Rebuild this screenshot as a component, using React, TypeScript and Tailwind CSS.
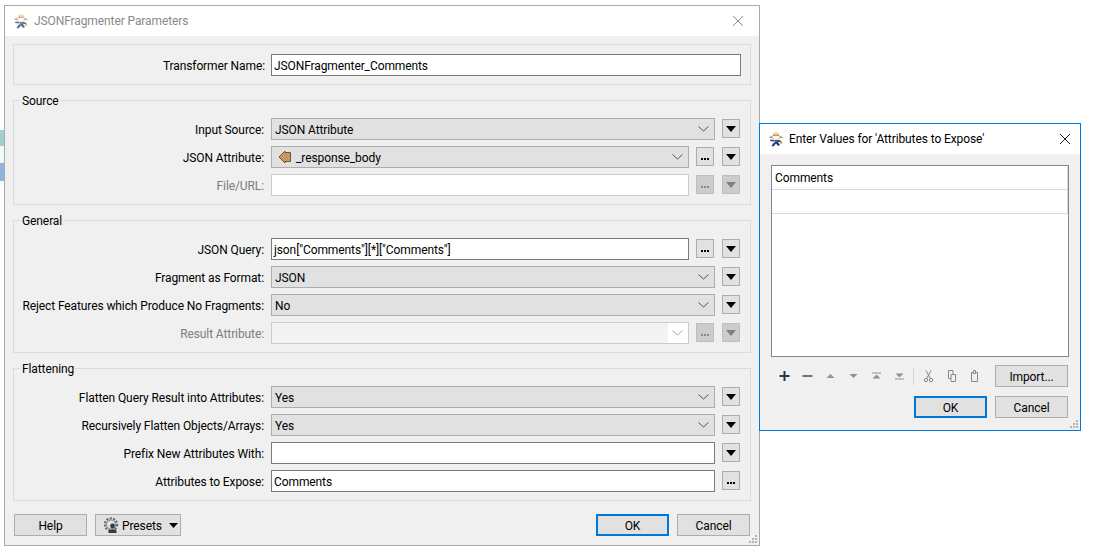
import type { ReactNode } from "react";

const FmeIcon = ({ dim = false }: { dim?: boolean }) => (
  <svg width="16" height="16" viewBox="0 0 16 16" className={dim ? "opacity-75" : ""}>
    <path d="M0.5 6.5 L5 4.5 H11 L15.5 6.5 L11 7.5 H5 Z" fill="#8f9499" />
    <path d="M5 2.5 Q8 -0.5 11 2.5 V4 H5 Z" fill="#f3d98a" />
    <path d="M4.5 4 H11.5 V6.5 L9.5 9 H6.5 L4.5 6.5 Z" fill="#fbf7ef" stroke="#c9c4ba" strokeWidth="0.4" />
    <path d="M5.5 3.8 H7.5 V5 H5.5 Z M8.5 3.8 H10.5 V5 H8.5 Z" fill="#e2502f" />
    <path d="M6.5 9 H9.5 L10.5 11 L7 11.5 Z" fill="#2a5db0" />
    <path d="M7 11 L5 12.5 L3.5 15 L5.5 15.5 L8 12.5 L10 15 L12 14 L10 11 Z" fill="#1f3f7a" />
    <path d="M2.5 8.5 L6.5 9 L6 10.5 L2 10 Z" fill="#3b4148" />
    <path d="M9.5 8.5 L13.5 10 L13 11.5 L9.5 10.5 Z" fill="#3b4148" />
    <path d="M12 11 L14 10.5 L14.5 12.5 L12.5 13 Z" fill="#e8a23a" />
  </svg>
);

const CloseIcon = ({ color }: { color: string }) => (
  <svg width="12" height="12" viewBox="0 0 12 12" fill="none" stroke={color} strokeWidth="1">
    <path d="M1 1 L11 11 M11 1 L1 11" />
  </svg>
);

const Chevron = ({ dim = false }: { dim?: boolean }) => (
  <svg width="11" height="6" viewBox="0 0 11 6" fill="none" stroke={dim ? "#a8a8a8" : "#555"} strokeWidth="1">
    <path d="M0.5 0.5 L5.5 5 L10.5 0.5" />
  </svg>
);

const MenuBtn = ({ disabled = false }: { disabled?: boolean }) => (
  <div
    className={`flex h-[19px] w-[18px] shrink-0 items-center justify-center border ${
      disabled ? "border-[#bfbfbf] bg-[#cccccc]" : "border-[#adadad] bg-[#e1e1e1]"
    }`}
  >
    <svg width="10" height="6" viewBox="0 0 10 6">
      <path d="M0 0 H10 L5 6 Z" fill={disabled ? "#7f7f7f" : "#000"} />
    </svg>
  </div>
);

const DotsBtn = ({ disabled = false }: { disabled?: boolean }) => (
  <div
    className={`flex h-[19px] w-[18px] shrink-0 items-end justify-center gap-px pb-[5px] border ${
      disabled ? "border-[#bfbfbf] bg-[#cccccc]" : "border-[#adadad] bg-[#e1e1e1]"
    }`}
  >
    <span className={`h-0.5 w-0.5 ${disabled ? "bg-[#8a8a8a]" : "bg-black"}`} />
    <span className={`h-0.5 w-0.5 ${disabled ? "bg-[#8a8a8a]" : "bg-black"}`} />
    <span className={`h-0.5 w-0.5 ${disabled ? "bg-[#8a8a8a]" : "bg-black"}`} />
  </div>
);

const Combo = ({ children }: { children: ReactNode }) => (
  <div className="flex h-[22px] min-w-0 flex-1 items-center border border-[#adadad] bg-[#e1e1e1] pl-[3px] pr-[5px] text-black">
    <div className="flex flex-1 items-center pt-[2px]">{children}</div>
    <Chevron />
  </div>
);

const TextBox = ({ value = "", disabled = false }: { value?: string; disabled?: boolean }) => (
  <div
    className={`flex h-[22px] min-w-0 flex-1 items-center border pl-[2px] pt-[2px] ${
      disabled ? "border-[#cccccc] bg-white" : "border-[#7a7a7a] bg-white"
    }`}
  >
    {value}
  </div>
);

const Row = ({ label, dim = false, children }: { label: string; dim?: boolean; children: ReactNode }) => (
  <div className="flex items-start gap-[7px] pr-[10px]">
    <div className={`h-[22px] w-[250px] shrink-0 text-right leading-[24px] whitespace-nowrap ${dim ? "text-[#7d7d7d]" : "text-black"}`}>
      {label}:
    </div>
    {children}
  </div>
);

const Side = ({ children }: { children: ReactNode }) => (
  <div className="flex shrink-0 items-start gap-[8px] pt-px">{children}</div>
);

const Group = ({ title, className = "", children }: { title: string; className?: string; children: ReactNode }) => (
  <div className={`relative flex flex-col gap-[6px] border border-[#dcdcdc] pb-[8px] pt-[17px] ${className}`}>
    <span className="absolute left-[6px] top-[-8px] bg-[#f0f0f0] pl-[2px] pr-px leading-[16px] text-black">{title}</span>
    {children}
  </div>
);

const Btn = ({ children, primary = false, className = "" }: { children: ReactNode; primary?: boolean; className?: string }) => (
  <div
    className={`flex h-[22px] w-[73px] items-center justify-center bg-[#e1e1e1] pt-[2px] text-black ${
      primary ? "border-2 border-[#0078d7]" : "border border-[#adadad]"
    } ${className}`}
  >
    {children}
  </div>
);

const PresetsIcon = () => (
  <svg width="17" height="17" viewBox="0 0 17 17" fill="none">
    <circle cx="8" cy="7.5" r="6.2" stroke="#5f6468" strokeWidth="2" strokeDasharray="2 1.4" />
    <circle cx="8" cy="7.5" r="4.6" stroke="#5f6468" strokeWidth="0.8" />
    <circle cx="9.5" cy="9" r="2.4" fill="#2a3f4f" />
    <path d="M5.5 16 V14.6 Q5.5 12.5 7.5 12.5 H11.5 Q13.5 12.5 13.5 14.6 V16 Z" fill="#2a3f4f" />
  </svg>
);

const ToolIcon = ({ children }: { children: ReactNode }) => (
  <svg width="23" height="16" viewBox="0 0 23 16" className="shrink-0">
    {children}
  </svg>
);

const Toolbar = () => (
  <div className="ml-[2px] flex items-center">
    <ToolIcon>
      <path d="M11.5 3 V13 M6.5 8 H16.5" stroke="#24384a" strokeWidth="2" />
    </ToolIcon>
    <ToolIcon>
      <path d="M6.5 8 H16.5" stroke="#6d747a" strokeWidth="2" />
    </ToolIcon>
    <ToolIcon>
      <path d="M7.5 10 L11.5 6 L15.5 10 Z" fill="#8d9296" />
    </ToolIcon>
    <ToolIcon>
      <path d="M7.5 6 L11.5 10 L15.5 6 Z" fill="#8d9296" />
    </ToolIcon>
    <ToolIcon>
      <path d="M7 4.5 H16 V5.5 H7 Z M7.5 10.5 L11.5 6.5 L15.5 10.5 Z" fill="#8d9296" />
    </ToolIcon>
    <ToolIcon>
      <path d="M7.5 5.5 L11.5 9.5 L15.5 5.5 Z M7 10.5 H16 V11.5 H7 Z" fill="#8d9296" />
    </ToolIcon>
    <div className="ml-[2px] mr-[3px] h-[17px] w-px bg-[#d5d5d5]" />
    <ToolIcon>
      <path d="M9 2.5 L13 10 M14 2.5 L10 10" stroke="#85898c" strokeWidth="1" fill="none" />
      <circle cx="9" cy="12" r="1.7" stroke="#85898c" fill="none" />
      <circle cx="14" cy="12" r="1.7" stroke="#85898c" fill="none" />
    </ToolIcon>
    <ToolIcon>
      <path d="M8.5 2.5 H13 V10.5 H8.5 Z" stroke="#85898c" fill="#f0f0f0" />
      <path d="M11 6.5 H15.5 V13.5 H11 Z" stroke="#85898c" fill="#f0f0f0" />
    </ToolIcon>
    <ToolIcon>
      <path d="M8.5 4.5 H14.5 V13.5 H8.5 Z" stroke="#85898c" fill="#f0f0f0" />
      <path d="M10.5 2.5 H12.5 V5.5 H10.5 Z" stroke="#85898c" fill="#f0f0f0" />
    </ToolIcon>
  </div>
);

const Grip = () => (
  <svg width="10" height="10" viewBox="0 0 10 10" className="absolute bottom-px right-px">
    <path d="M7 1 h2 v2 h-2 Z M4 4 h2 v2 h-2 Z M7 4 h2 v2 h-2 Z M1 7 h2 v2 h-2 Z M4 7 h2 v2 h-2 Z M7 7 h2 v2 h-2 Z" fill="#b5b5b5" />
  </svg>
);

const ParametersWindow = () => (
  <div className="absolute left-[4px] top-[5px] flex h-[541px] w-[756px] flex-col border border-[#a9a9a9] bg-[#f0f0f0]">
    <div className="flex h-[30px] shrink-0 items-center bg-white pl-[8px] pr-[15px] text-[#8a8a8a]">
      <FmeIcon dim />
      <span className="ml-[5px] flex-1">JSONFragmenter Parameters</span>
      <CloseIcon color="#8a8a8a" />
    </div>
    <div className="flex flex-1 flex-col px-[8px] pt-[8px]">
      <div className="flex items-center gap-[6px] border border-[#dcdcdc] pb-[8px] pl-[0px] pr-[9px] pt-[9px]">
        <div className="h-[22px] w-[251px] shrink-0 text-right leading-[24px] text-black">Transformer Name:</div>
        <TextBox value="JSONFragmenter_Comments" />
      </div>

      <Group title="Source" className="mt-[15px]">
        <Row label="Input Source">
          <Combo>JSON Attribute</Combo>
          <Side>
            <MenuBtn />
          </Side>
        </Row>
        <Row label="JSON Attribute">
          <Combo>
            <svg width="14" height="14" viewBox="0 0 14 14" className="ml-[3px] mr-[4px] -translate-y-px">
              <path d="M1 7 L7 1 V2.5 H12.5 V11.5 H7 V13 Z" fill="#c49a62" stroke="#6f5530" strokeWidth="1" />
            </svg>
            _response_body
          </Combo>
          <Side>
            <DotsBtn />
            <MenuBtn />
          </Side>
        </Row>
        <Row label="File/URL" dim>
          <TextBox disabled />
          <Side>
            <DotsBtn disabled />
            <MenuBtn disabled />
          </Side>
        </Row>
      </Group>

      <Group title="General" className="mt-[15px]">
        <Row label="JSON Query">
          <TextBox value={'json["Comments"][*]["Comments"]'} />
          <Side>
            <DotsBtn />
            <MenuBtn />
          </Side>
        </Row>
        <Row label="Fragment as Format">
          <Combo>JSON</Combo>
          <Side>
            <MenuBtn />
          </Side>
        </Row>
        <Row label="Reject Features which Produce No Fragments">
          <Combo>No</Combo>
          <Side>
            <MenuBtn />
          </Side>
        </Row>
        <Row label="Result Attribute" dim>
          <div className="flex h-[22px] min-w-0 flex-1 items-center border border-[#cccccc] bg-white pr-[5px]">
            <div className="mr-[3px] h-full flex-1 border-r border-white bg-[#f3f3f3]" />
            <Chevron dim />
          </div>
          <Side>
            <DotsBtn disabled />
            <MenuBtn disabled />
          </Side>
        </Row>
      </Group>

      <Group title="Flattening" className="mt-[15px]">
        <Row label="Flatten Query Result into Attributes">
          <Combo>Yes</Combo>
          <Side>
            <MenuBtn />
          </Side>
        </Row>
        <Row label="Recursively Flatten Objects/Arrays">
          <Combo>Yes</Combo>
          <Side>
            <MenuBtn />
          </Side>
        </Row>
        <Row label="Prefix New Attributes With">
          <TextBox />
          <Side>
            <MenuBtn />
          </Side>
        </Row>
        <Row label="Attributes to Expose">
          <TextBox value="Comments" />
          <Side>
            <DotsBtn />
          </Side>
        </Row>
      </Group>

      <div className="mt-[13px] flex items-start px-px">
        <Btn>Help</Btn>
        <div className="ml-[8px] flex h-[22px] w-[86px] items-center border border-[#adadad] bg-[#e1e1e1] pl-[7px] text-black">
          <PresetsIcon />
          <span className="ml-[2px] pt-[2px]">Presets</span>
          <svg width="9" height="5" viewBox="0 0 9 5" className="ml-[7px]">
            <path d="M0 0 H9 L4.5 5 Z" fill="#000" />
          </svg>
        </div>
        <div className="flex-1" />
        <Btn primary>OK</Btn>
        <Btn className="ml-[8px]">Cancel</Btn>
      </div>
    </div>
    <Grip />
  </div>
);

const ValuesWindow = () => (
  <div className="absolute left-[759px] top-[123px] flex h-[308px] w-[322px] flex-col border border-[#0078d7] bg-[#f0f0f0]">
    <div className="flex h-[30px] shrink-0 items-center bg-white pl-[8px] pr-[9px] text-black">
      <FmeIcon />
      <span className="ml-[5px] flex-1">Enter Values for 'Attributes to Expose'</span>
      <CloseIcon color="#222" />
    </div>
    <div className="flex flex-1 flex-col px-[11px] pt-[11px]">
      <div className="flex h-[192px] flex-col border border-[#828790] bg-white">
        <div className="flex h-[24px] shrink-0 items-center border-b border-r border-[#d9d9d9] pl-[3px] text-black">Comments</div>
        <div className="h-[24px] shrink-0 border-b border-r border-[#d9d9d9] bg-white" />
      </div>
      <div className="mt-[8px] flex items-center justify-between pr-px">
        <Toolbar />
        <Btn>Import...</Btn>
      </div>
      <div className="mt-[9px] flex justify-end gap-[8px] pr-px">
        <Btn primary>OK</Btn>
        <Btn>Cancel</Btn>
      </div>
    </div>
    <Grip />
  </div>
);

export default function App() {
  return (
    <div
      className="relative h-[550px] w-[1098px] overflow-hidden bg-white text-[12px] tracking-[-0.1px]"
      style={{ fontFamily: 'Roboto, "Noto Sans", sans-serif' }}
    >
      {/* bit of the canvas showing behind the dialog */}
      <div className="absolute left-0 top-[130px] w-[4px]">
        <div className="h-[16px] bg-[#9fd0cc]" />
        <div className="h-[17px] bg-[#f3f9fb]" />
        <div className="h-[18px] bg-[#8fb4dc]" />
      </div>
      <ParametersWindow />
      <ValuesWindow />
    </div>
  );
}
